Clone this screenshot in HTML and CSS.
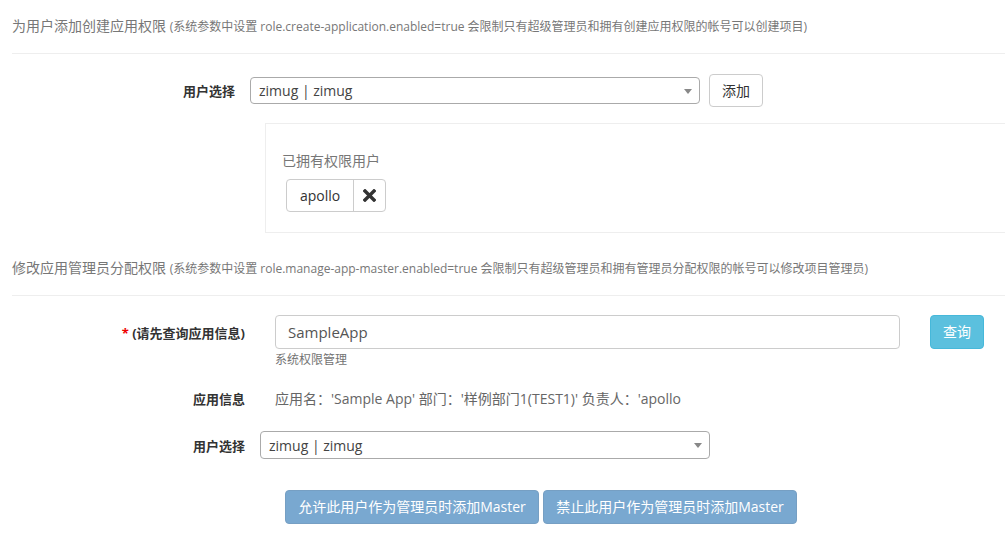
FILE: index.html
```html
<!DOCTYPE html>
<html>
<head>
<meta charset="utf-8">
<link rel="stylesheet" href="styles.css">
</head>
<body>
<div class="page">
  <div class="section-head">为用户添加创建应用权限 <small>(系统参数中设置 role.create-application.enabled=true 会限制只有超级管理员和拥有创建应用权限的帐号可以创建项目)</small></div>
  <div class="rule"></div>

  <div class="row row-add">
    <label class="lbl lbl-a">用户选择</label>
    <div class="select select-a"><span>zimug | zimug</span><i class="caret"></i></div>
    <button class="btn btn-default">添加</button>
  </div>

  <div class="owned">
    <div class="owned-title">已拥有权限用户</div>
    <div class="tag">
      <span class="tag-name">apollo</span>
      <span class="tag-del"><svg width="13" height="13" viewBox="0 0 13 13"><path d="M2 2 L11 11 M11 2 L2 11" stroke="#333" stroke-width="3.4" stroke-linecap="square"/></svg></span>
    </div>
  </div>

  <div class="section-head head-2">修改应用管理员分配权限 <small>(系统参数中设置 role.manage-app-master.enabled=true 会限制只有超级管理员和拥有管理员分配权限的帐号可以修改项目管理员)</small></div>
  <div class="rule"></div>

  <div class="row row-app">
    <label class="lbl lbl-b"><span class="req">*</span> (请先查询应用信息)</label>
    <div class="input">SampleApp</div>
    <button class="btn btn-info">查询</button>
  </div>
  <div class="help">系统权限管理</div>

  <div class="row row-info">
    <label class="lbl lbl-b">应用信息</label>
    <div class="info">应用名：'Sample App' 部门：'样例部门1(TEST1)' 负责人：'apollo</div>
  </div>

  <div class="row row-user">
    <label class="lbl lbl-c">用户选择</label>
    <div class="select select-b"><span>zimug | zimug</span><i class="caret"></i></div>
  </div>

  <div class="actions">
    <button class="btn btn-primary" disabled>允许此用户作为管理员时添加Master</button>
    <button class="btn btn-primary" disabled>禁止此用户作为管理员时添加Master</button>
  </div>
</div>
</body>
</html>
```
FILE: styles.css
```css
html, body {
  margin: 0;
  padding: 0;
  background: #fff;
  overflow: hidden;
}
body {
  font-family: "Segoe UI", "Open Sans", "Noto Sans CJK SC", sans-serif;
  font-size: 14px;
  color: #333;
  width: 1005px;
  height: 534px;
}
.page {
  padding: 16px 0 0 12px;
}
.section-head {
  font-size: 14px;
  line-height: 20px;
  color: #777;
  white-space: nowrap;
}
.section-head small {
  font-size: 12px;
}
.head-2 {
  margin-top: 25px;
}
.rule {
  height: 1px;
  background: #eee;
  margin-top: 16px;
  margin-right: -20px;
}
.row {
  display: flex;
  align-items: center;
}
.lbl {
  font-weight: bold;
  font-size: 13px;
  text-align: right;
  flex: none;
}
.lbl-a { width: 223px; margin-right: 15px; }
.lbl-b { width: 233px; margin-right: 30px; }
.lbl-c { width: 233px; margin-right: 15px; }
.req { color: #e00; }

.row-add { margin-top: 20px; height: 33px; }

.select {
  box-sizing: border-box;
  border: 1px solid #aaa;
  border-radius: 4px;
  display: flex;
  align-items: center;
  padding: 0 8px;
  color: #444;
  font-size: 14px;
  position: relative;
}
.select-a { width: 450px; height: 27px; }
.select-b { width: 450px; height: 28px; }
.caret {
  position: absolute;
  right: 7px;
  top: 50%;
  margin-top: -2px;
  border-left: 4px solid transparent;
  border-right: 4px solid transparent;
  border-top: 5px solid #888;
}
.btn {
  font-family: inherit;
  font-size: 14px;
  line-height: 20px;
  border-radius: 4px;
  border: 1px solid #ccc;
  padding: 6px 12px;
  background: #fff;
  color: #333;
  box-sizing: border-box;
  height: 33px;
}
.btn-default { margin-left: 9px; width: 54px; padding: 6px 0; }
.btn-info {
  background: #5bc0de;
  border-color: #46b8da;
  color: #fff;
  margin-left: 30px;
  width: 54px;
  height: 34px;
  padding: 6px 0;
}
.btn-primary {
  background: #337ab7;
  border-color: #2e6da4;
  color: #fff;
  opacity: 0.65;
  width: 254px;
  height: 34px;
  padding: 6px 0;
}

.owned {
  margin: 16px 0 0 253px;
  border: 1px solid #eee;
  border-right: none;
  height: 108px;
  box-sizing: content-box;
  padding: 0 0 0 16px;
}
.owned-title {
  margin-top: 27px;
  line-height: 20px;
  color: #777;
  font-size: 14px;
}
.tag {
  display: inline-flex;
  margin: 8px 0 0 4px;
  border: 1px solid #ccc;
  border-radius: 4px;
  height: 33px;
  box-sizing: border-box;
  align-items: stretch;
}
.tag-name {
  display: flex;
  align-items: center;
  padding: 0 13px;
  border-right: 1px solid #ccc;
  color: #333;
}
.tag-del {
  display: flex;
  align-items: center;
  justify-content: center;
  width: 31px;
}

.row-app { margin-top: 19px; }
.input {
  box-sizing: border-box;
  width: 625px;
  height: 34px;
  border: 1px solid #ccc;
  border-radius: 4px;
  display: flex;
  align-items: center;
  padding: 0 12px;
  font-size: 15px;
  color: #555;
}
.help {
  margin-left: 263px;
  font-size: 12px;
  line-height: 16px;
  color: #737373;
  margin-top: 3px;
}
.row-info { margin-top: 20px; height: 20px; }
.info { color: #666; font-size: 14px; }
.row-user { margin-top: 23px; }
.actions {
  margin-top: 31px;
  padding-left: 273px;
  display: flex;
  gap: 4px;
}
```
